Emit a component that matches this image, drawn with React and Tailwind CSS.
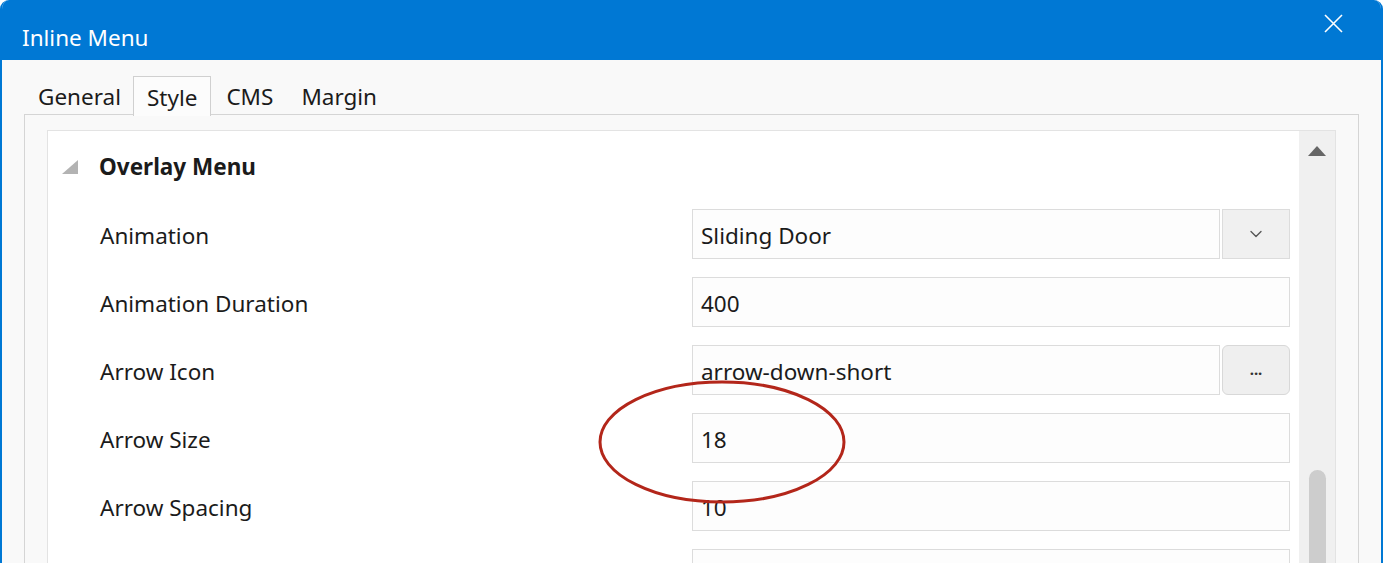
import { ChevronDown } from "lucide-react";

const rows = [
    { label: "Animation", value: "Sliding Door", addon: "select" },
    { label: "Animation Duration", value: "400" },
    { label: "Arrow Icon", value: "arrow-down-short", addon: "browse" },
    { label: "Arrow Size", value: "18" },
    { label: "Arrow Spacing", value: "10" },
    { label: "", value: "" },
];

const font = { fontFamily: '"Noto Sans", "Open Sans", sans-serif' };

function Field({ row }) {
    return (
        <div className="flex items-center h-[50px] mb-[18px]">
            <div className="w-[644px] pl-[52px] text-[22.5px] text-[#1b1b1b] pt-[3px]">{row.label}</div>
            <div className="flex w-[598px] h-[50px] gap-[2px]">
                <div className="flex-1 flex items-center px-[8px] pt-[4px] bg-[#fdfdfd] border border-[#dcdcdc] text-[22.5px] text-[#1b1b1b]">
                    {row.value}
                </div>
                {row.addon === "select" && (
                    <div className="w-[68px] flex items-center justify-center bg-[#f0f0f0] border border-[#dcdcdc]">
                        <ChevronDown size={20} strokeWidth={1.6} className="text-[#555]" />
                    </div>
                )}
                {row.addon === "browse" && (
                    <div className="w-[68px] flex items-center justify-center bg-[#efefef] border border-[#d8d8d8] rounded-[6px] text-[15px] font-bold text-[#333] pb-[2px]">
                        ...
                    </div>
                )}
            </div>
        </div>
    );
}

export default function App() {
    return (
        <div
            className="relative w-[1383px] h-[563px] overflow-hidden bg-[#f9f9f9] rounded-t-[9px] border-x-2 border-[#0078d4]"
            style={font}
        >
            {/* Title bar */}
            <div className="flex items-center justify-between h-[60px] bg-[#0078d4] pl-[20px] pr-[38px] pt-[16px]">
                <span className="text-[22.5px] text-white">Inline Menu</span>
                <svg width="19" height="19" viewBox="0 0 19 19" className="mb-[30px]">
                    <path d="M1 1L18 18M18 1L1 18" stroke="white" strokeWidth="1.6" />
                </svg>
            </div>

            {/* Tabs */}
            <div className="flex pl-[26px] pt-[16px] h-[55px] text-[22.5px] text-[#1b1b1b]">
                <div className="pl-[10px] pr-[12px] pt-[4px]">General</div>
                <div className="relative z-10 px-[13px] pt-[4px] h-[40px] bg-[#fcfcfc] border border-b-0 border-[#d0d0d0]">Style</div>
                <div className="px-[15px] pt-[4px]">CMS</div>
                <div className="px-[13px] pt-[4px]">Margin</div>
            </div>

            {/* Tab panel */}
            <div className="ml-[22px] w-[1335px] h-[460px] -mt-px border border-[#d5d5d5] pt-[15px] pl-[22px]">
                <div className="flex w-[1289px] h-[450px] bg-white border border-[#e3e3e3]">
                    <div className="flex-1">
                        <div className="flex items-center h-[70px] pt-[1px]">
                            <svg width="16" height="14" viewBox="0 0 16 14" className="ml-[14px] mr-[21px]">
                                <path d="M16 0V14H0Z" fill="#b3b3b3" />
                            </svg>
                            <span className="text-[22.5px] font-bold text-[#1b1b1b]">Overlay Menu</span>
                        </div>
                        <div className="pt-[8px]">
                            {rows.map((r, i) => (
                                <Field key={i} row={r} />
                            ))}
                        </div>
                    </div>

                    {/* Scrollbar */}
                    <div className="w-[36px] bg-[#f0f0f0] flex flex-col items-center">
                        <svg width="18" height="10" viewBox="0 0 18 10" className="mt-[15px]">
                            <path d="M9 0L18 10H0Z" fill="#666" />
                        </svg>
                        <div className="w-[17px] flex-1 mt-[314px] rounded-t-full bg-[#cdcdcd]" />
                    </div>
                </div>
            </div>

            {/* Annotation */}
            <svg className="absolute left-0 top-0 pointer-events-none" width="1383" height="563">
                <ellipse cx="720" cy="442" rx="122" ry="60" fill="none" stroke="#b3261a" strokeWidth="3" />
            </svg>
        </div>
    );
}
